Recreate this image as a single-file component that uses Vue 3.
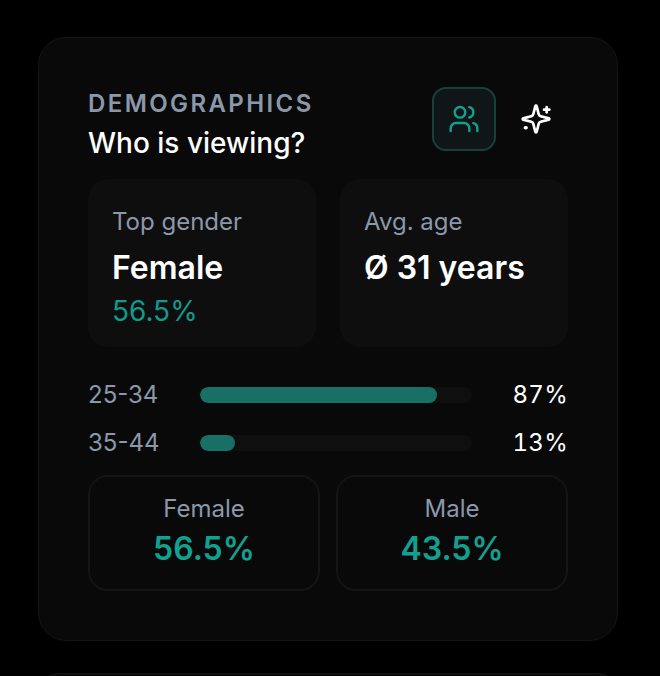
<template>
  <div class="page">
    <section class="card">
      <header class="card-head">
        <div class="titles">
          <div class="eyebrow">DEMOGRAPHICS</div>
          <h2 class="title">Who is viewing?</h2>
        </div>
        <div class="actions">
          <button class="icon-btn active">
            <svg width="32" height="32" viewBox="0 0 24 24" fill="none" stroke="currentColor" stroke-width="1.8" stroke-linecap="round" stroke-linejoin="round">
              <path d="M16 21v-2a4 4 0 0 0-4-4H6a4 4 0 0 0-4 4v2" />
              <circle cx="9" cy="7" r="4" />
              <path d="M22 21v-2a4 4 0 0 0-3-3.87" />
              <path d="M16 3.13a4 4 0 0 1 0 7.75" />
            </svg>
          </button>
          <button class="icon-btn">
            <svg width="32" height="32" viewBox="0 0 24 24" fill="none" stroke="currentColor" stroke-width="2" stroke-linecap="round" stroke-linejoin="round">
              <path d="M9.94 15.5A2 2 0 0 0 8.5 14.06l-6.14-1.58a.5.5 0 0 1 0-.96L8.5 9.94A2 2 0 0 0 9.94 8.5l1.58-6.14a.5.5 0 0 1 .96 0L14.06 8.5A2 2 0 0 0 15.5 9.94l6.14 1.58a.5.5 0 0 1 0 .96L15.5 14.06a2 2 0 0 0-1.44 1.44l-1.58 6.14a.5.5 0 0 1-.96 0z" />
              <path d="M20 3v4" />
              <path d="M22 5h-4" />
              <path d="M4 18.5h.6" stroke-width="2.6" />
            </svg>
          </button>
        </div>
      </header>

      <div class="stats">
        <div v-for="s in stats" :key="s.label" class="stat">
          <div class="stat-label">{{ s.label }}</div>
          <div class="stat-value">{{ s.value }}</div>
          <div v-if="s.sub" class="stat-sub">{{ s.sub }}</div>
        </div>
      </div>

      <div class="ages">
        <div v-for="a in ages" :key="a.range" class="age-row">
          <span class="age-range">{{ a.range }}</span>
          <div class="track">
            <div class="fill" :style="{ width: a.pct + '%' }"></div>
          </div>
          <span class="age-pct">{{ a.pct }}%</span>
        </div>
      </div>

      <div class="genders">
        <div v-for="g in genders" :key="g.label" class="gender">
          <div class="gender-label">{{ g.label }}</div>
          <div class="gender-value">{{ g.value }}</div>
        </div>
      </div>
    </section>
    <div class="next-card"></div>
  </div>
</template>

<script setup>
const stats = [
  { label: 'Top gender', value: 'Female', sub: '56.5%' },
  { label: 'Avg. age', value: 'Ø 31 years' },
]
const ages = [
  { range: '25-34', pct: 87 },
  { range: '35-44', pct: 13 },
]
const genders = [
  { label: 'Female', value: '56.5%' },
  { label: 'Male', value: '43.5%' },
]
</script>

<style>
html,
body {
  background: #000;
}
</style>

<style scoped>
.page {
  height: 676px;
  overflow: hidden;
  padding: 37px 42px 0 38px;
  box-sizing: border-box;
  font-family: Inter, "Liberation Sans", sans-serif;
  color: #fff;
}

.card {
  height: 604px;
  box-sizing: border-box;
  padding: 49px;
  background: #090909;
  border: 1px solid #131615;
  border-radius: 28px;
}

.card-head {
  display: flex;
  justify-content: space-between;
  align-items: flex-start;
  height: 92px;
}

.eyebrow {
  margin-top: 3px;
  font-size: 24px;
  line-height: 28px;
  font-weight: 600;
  letter-spacing: 2.4px;
  color: #8b98ab;
}

.title {
  margin: 8px 0 0;
  font-size: 28px;
  line-height: 34px;
  font-weight: 500;
  color: #fff;
}

.actions {
  display: flex;
  gap: 8px;
}

.icon-btn {
  width: 64px;
  height: 64px;
  display: flex;
  align-items: center;
  justify-content: center;
  padding: 0;
  background: transparent;
  border: 2px solid transparent;
  border-radius: 14px;
  color: #fff;
}

.icon-btn.active {
  background: #101617;
  border-color: #184039;
  color: #14a08e;
}

.stats {
  display: grid;
  grid-template-columns: 1fr 1fr;
  gap: 24px;
}

.stat {
  height: 168px;
  box-sizing: border-box;
  padding: 28px 24px 0;
  background: #0e0e0e;
  border-radius: 20px;
}

.stat-label {
  font-size: 24px;
  line-height: 30px;
  color: #8b98ab;
}

.stat-value {
  margin-top: 10px;
  font-size: 32px;
  line-height: 42px;
  font-weight: 600;
  color: #fff;
}

.stat-sub {
  margin-top: 5px;
  font-size: 28px;
  line-height: 34px;
  color: #109a8b;
}

.ages {
  display: flex;
  flex-direction: column;
  gap: 20px;
  margin-top: 33px;
}

.age-row {
  display: grid;
  grid-template-columns: 112px 272px 1fr;
  align-items: center;
  height: 28px;
}

.age-range {
  font-size: 24px;
  color: #8b98ab;
}

.track {
  height: 16px;
  background: #0f0f0f;
  border-radius: 8px;
  overflow: hidden;
}

.fill {
  height: 100%;
  background: #186f63;
  border-radius: 8px;
}

.age-pct {
  text-align: right;
  font-size: 24px;
  font-variant-numeric: tabular-nums;
  letter-spacing: 0.3px;
  color: #fff;
}

.genders {
  display: grid;
  grid-template-columns: 1fr 1fr;
  gap: 16px;
  margin-top: 19px;
}

.gender {
  height: 116px;
  box-sizing: border-box;
  padding-top: 17px;
  text-align: center;
  border: 2px solid #121514;
  border-radius: 20px;
}

.gender-label {
  font-size: 24px;
  line-height: 30px;
  color: #8b98ab;
}

.gender-value {
  margin-top: 5px;
  font-size: 32px;
  line-height: 40px;
  font-weight: 600;
  color: #12a091;
}

.next-card {
  height: 40px;
  margin-top: 32px;
  background: #090909;
  border: 1px solid #131615;
  border-radius: 28px;
}
</style>
